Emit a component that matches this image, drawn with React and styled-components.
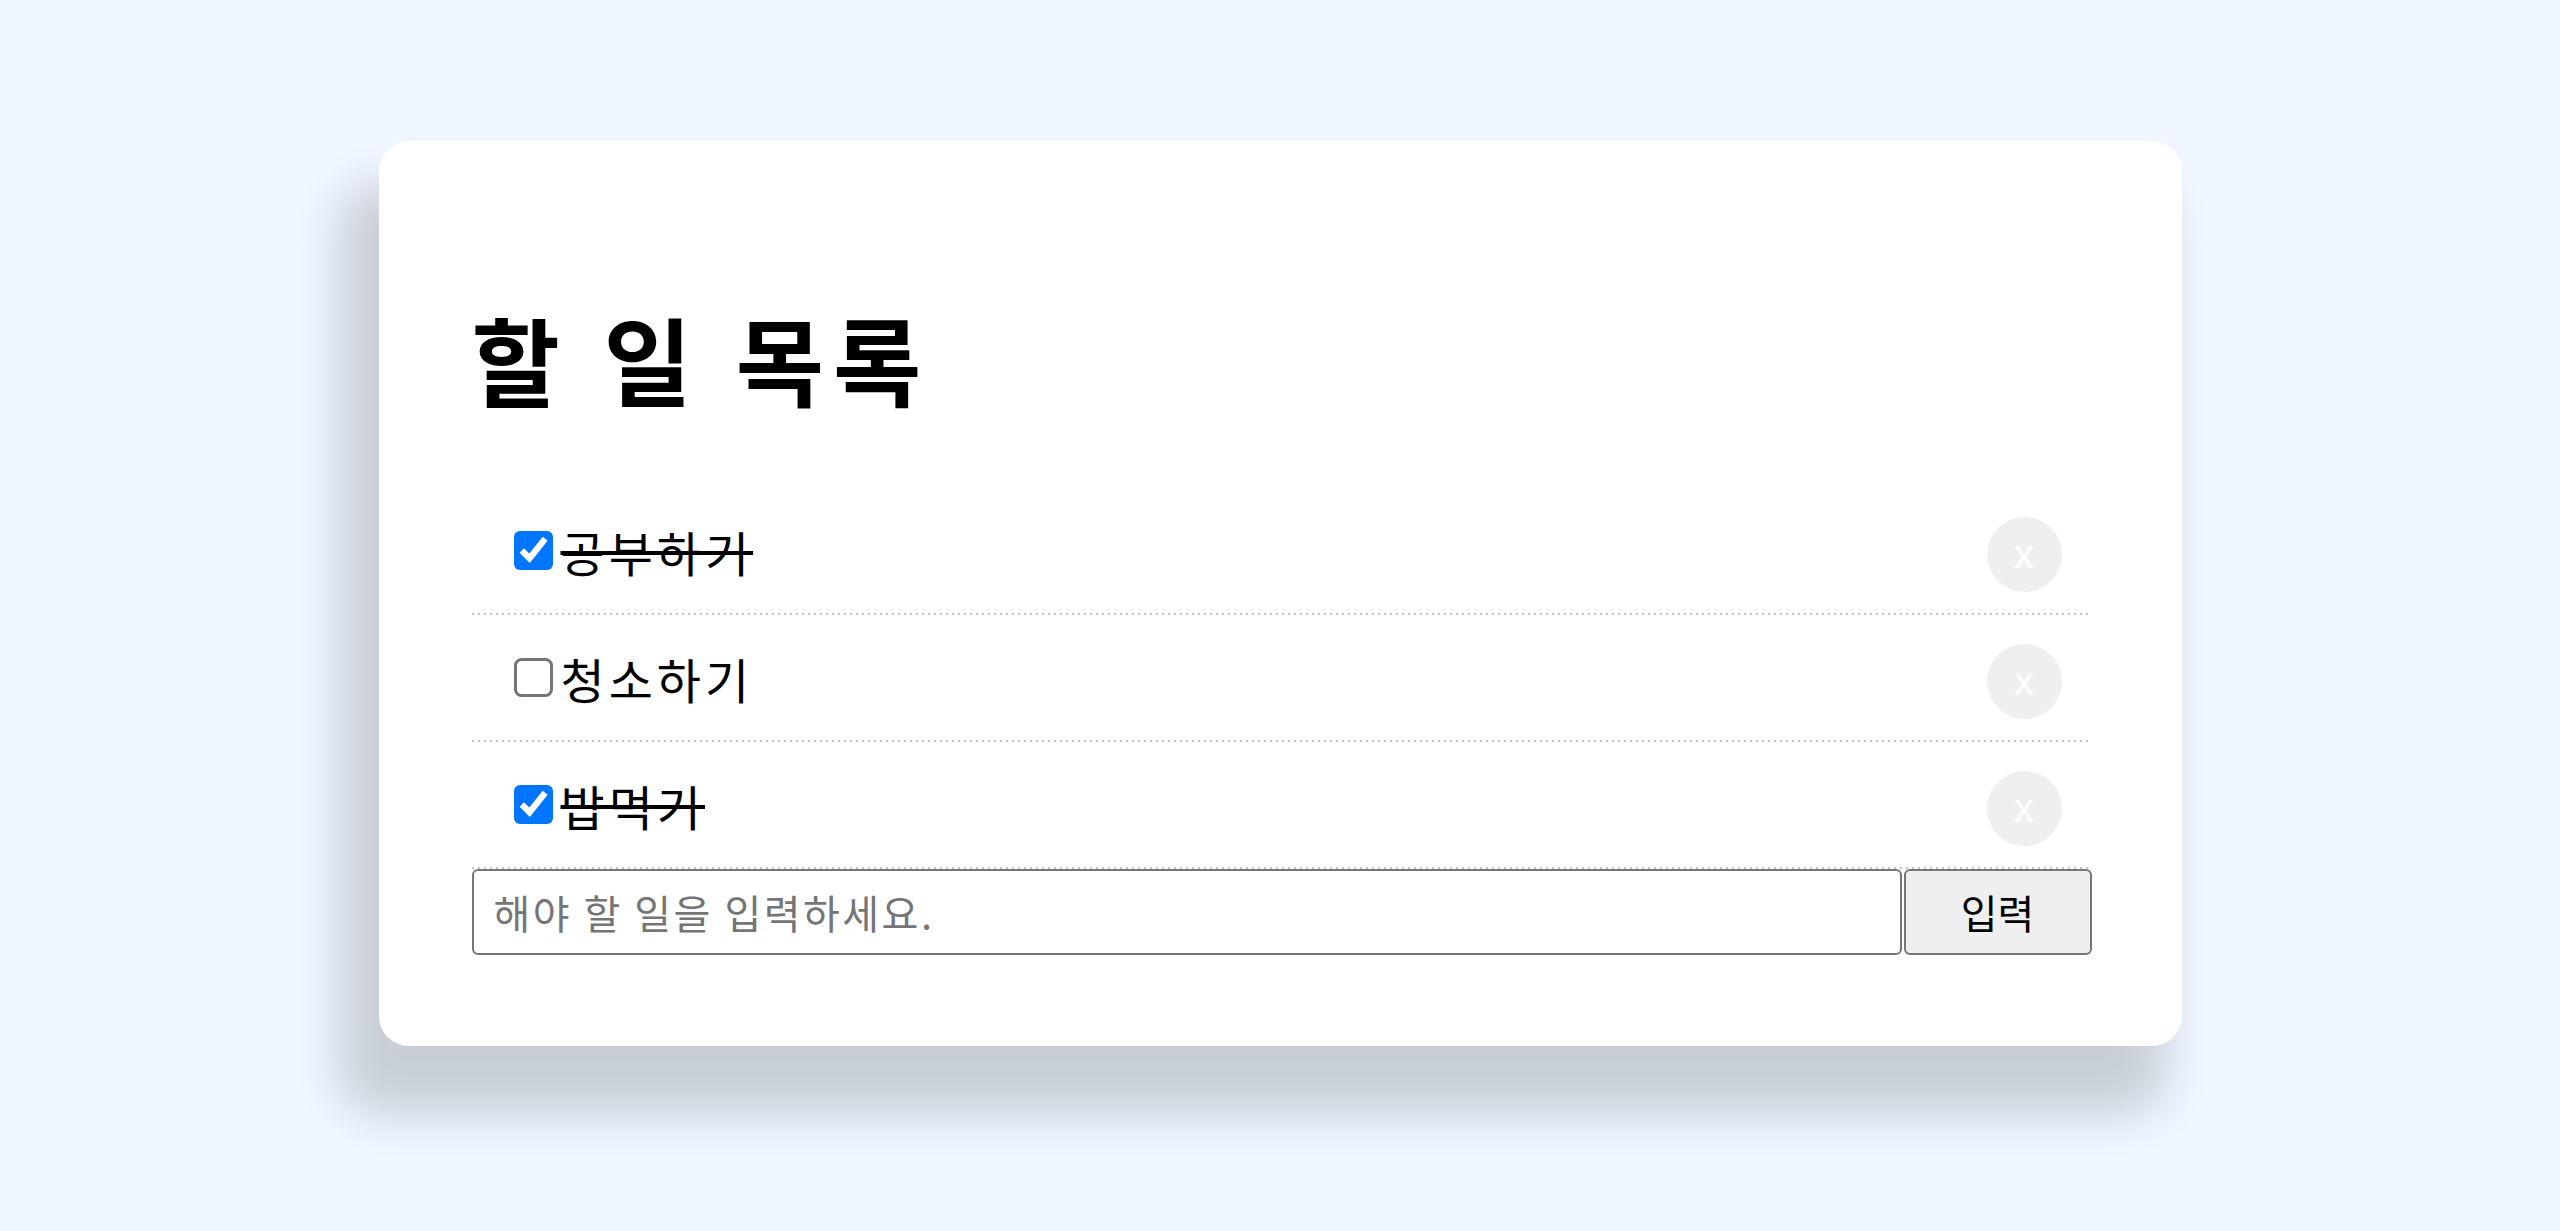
import React, { useState } from 'react';
import styled, { createGlobalStyle } from 'styled-components';

const GlobalStyle = createGlobalStyle`
  body {
    margin: 0;
    background: #eff6ff;
    font-family: "Liberation Sans", "Noto Sans CJK KR", sans-serif;
  }
`;

const Page = styled.div`
  box-sizing: border-box;
  min-height: 100vh;
  display: flex;
  justify-content: center;
  align-items: flex-start;
  padding-top: 141px;
`;

const Card = styled.div`
  box-sizing: border-box;
  width: 1803px;
  padding: 91px 90px 91px 93px;
  background: #ffffff;
  border-radius: 30px;
  box-shadow: -28px 56px 45px 12px rgba(0, 0, 0, 0.16);
`;

const Title = styled.h1`
  margin: 78px 0 82px 0;
  font-family: "Noto Sans CJK KR", sans-serif;
  font-size: 96px;
  font-weight: 700;
  line-height: 1;
  letter-spacing: 9px;
  word-spacing: 4px;
  color: #000;
`;

const List = styled.ul`
  list-style: none;
  margin: 0;
  padding: 0;
`;

/* dotted separator: 2px dots, 6px apart */
const Row = styled.li`
  box-sizing: border-box;
  display: flex;
  align-items: center;
  height: 127px;
  padding: 0 30px 2px 42px;
  background-image: repeating-linear-gradient(
    90deg,
    #c4c4c4 0 2px,
    transparent 2px 6px
  );
  background-size: 100% 2px;
  background-position: left bottom;
  background-repeat: no-repeat;
`;

const Check = styled.input`
  zoom: 3;
  width: 13px;
  height: 13px;
  margin: 0;
`;

const Label = styled.span`
  margin-left: 8px;
  font-family: "Noto Sans CJK KR", sans-serif;
  font-size: 48px;
  letter-spacing: 4px;
  color: #000;
  text-decoration: ${props => (props.done ? 'line-through' : 'none')};
`;

const DeleteButton = styled.button`
  margin-left: auto;
  margin-top: 8px;
  width: 75px;
  height: 75px;
  border: none;
  border-radius: 50%;
  background: #efefef;
  color: #ffffff;
  font-family: "Liberation Sans", sans-serif;
  font-size: 40px;
  padding: 0;
  cursor: pointer;
`;

const Form = styled.form`
  display: flex;
  gap: 2px;
  height: 86px;
`;

const Input = styled.input`
  flex: 1;
  box-sizing: border-box;
  height: 86px;
  padding: 0 20px;
  border: 2px solid #767676;
  border-radius: 6px;
  font-family: "Noto Sans CJK KR", sans-serif;
  font-size: 40px;
  letter-spacing: 2.5px;
  outline: none;

  &::placeholder {
    color: #757575;
  }
`;

const SubmitButton = styled.button`
  box-sizing: border-box;
  width: 188px;
  height: 86px;
  border: 2px solid #767676;
  border-radius: 6px;
  background: #efefef;
  color: #000;
  font-family: "Noto Sans CJK KR", sans-serif;
  font-size: 40px;
  cursor: pointer;
`;

const initialTodos = [
  { id: 1, text: '공부하기', done: true },
  { id: 2, text: '청소하기', done: false },
  { id: 3, text: '밥먹기', done: true },
];

export default function App() {
  const [todos, setTodos] = useState(initialTodos);
  const [value, setValue] = useState('');

  const toggle = id =>
    setTodos(todos.map(t => (t.id === id ? { ...t, done: !t.done } : t)));

  const remove = id => setTodos(todos.filter(t => t.id !== id));

  const add = e => {
    e.preventDefault();
    if (!value.trim()) return;
    setTodos([...todos, { id: Date.now(), text: value, done: false }]);
    setValue('');
  };

  return (
    <>
      <GlobalStyle />
      <Page>
        <Card>
          <Title>할 일 목록</Title>
          <List>
            {todos.map(todo => (
              <Row key={todo.id}>
                <Check
                  type="checkbox"
                  checked={todo.done}
                  onChange={() => toggle(todo.id)}
                />
                <Label done={todo.done}>{todo.text}</Label>
                <DeleteButton onClick={() => remove(todo.id)}>x</DeleteButton>
              </Row>
            ))}
          </List>
          <Form onSubmit={add}>
            <Input
              placeholder="해야 할 일을 입력하세요."
              value={value}
              onChange={e => setValue(e.target.value)}
            />
            <SubmitButton type="submit">입력</SubmitButton>
          </Form>
        </Card>
      </Page>
    </>
  );
}
